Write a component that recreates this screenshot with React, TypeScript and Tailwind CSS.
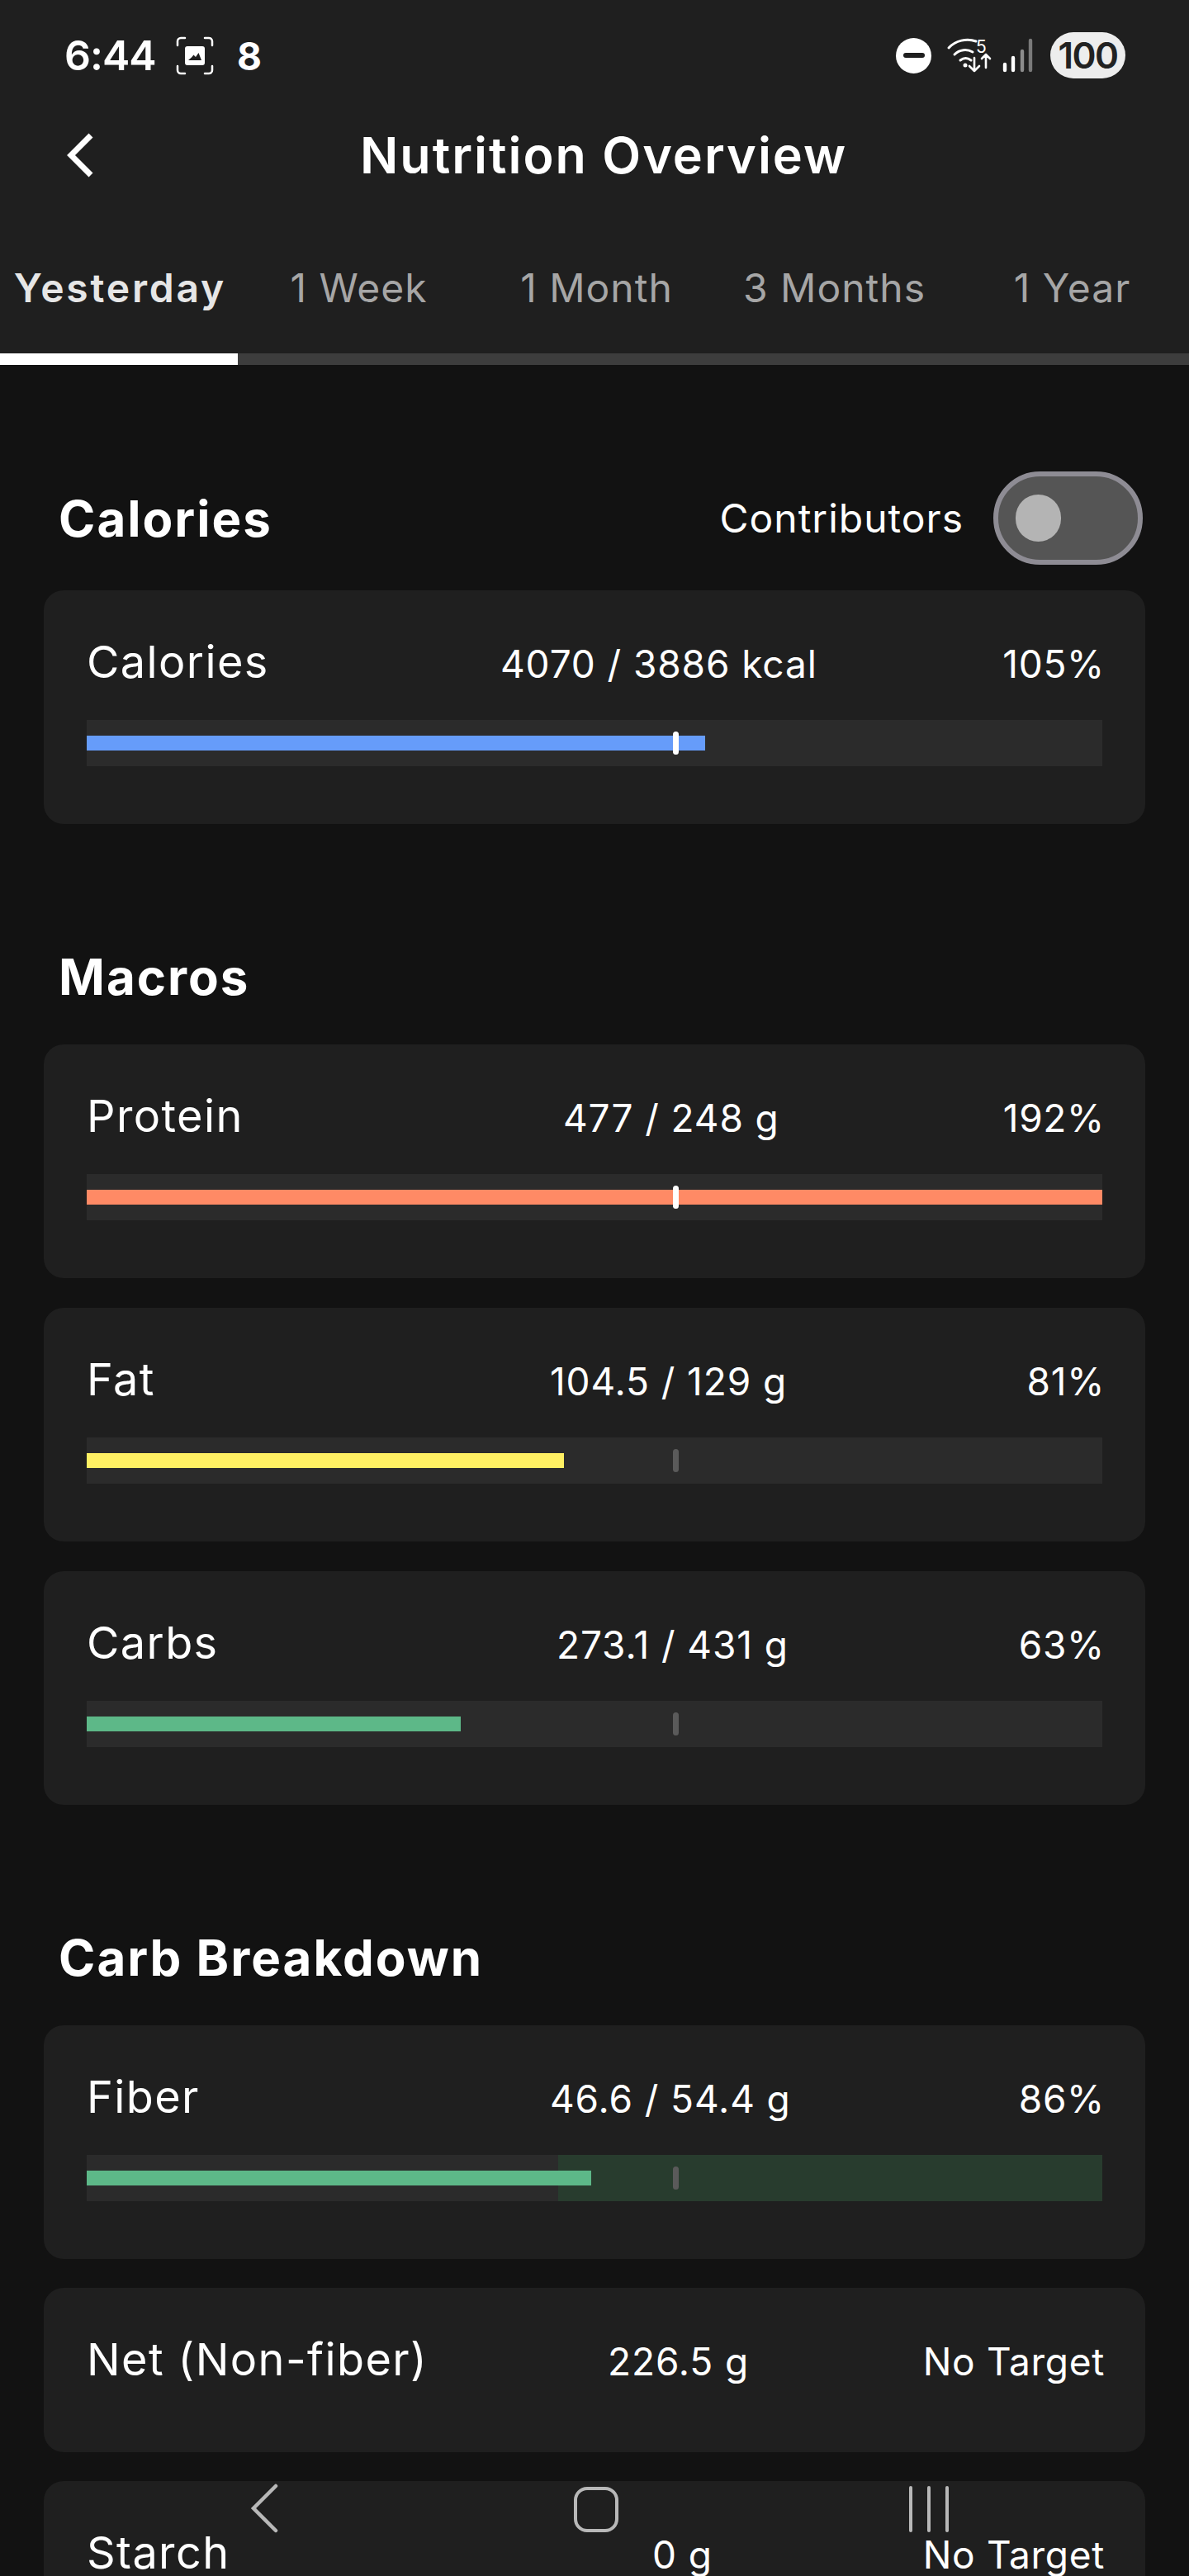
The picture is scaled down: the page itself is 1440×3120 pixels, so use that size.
import React from "react";

type Row = {
  name: string;
  value: string;
  pct: string;
  offset: string;
  fill?: string;
  color?: string;
  reached?: boolean;
  zone?: boolean;
};

const tabs = ["Yesterday", "1 Week", "1 Month", "3 Months", "1 Year"];

const calories: Row[] = [
  { name: "Calories", value: "4070 / 3886 kcal", pct: "105%", offset: "w-[501px]", fill: "w-[60.9%]", color: "bg-[#669cfa]", reached: true },
];
const macros: Row[] = [
  { name: "Protein", value: "477 / 248 g", pct: "192%", offset: "w-[577px]", fill: "w-full", color: "bg-[#ff8a65]", reached: true },
  { name: "Fat", value: "104.5 / 129 g", pct: "81%", offset: "w-[561px]", fill: "w-[47%]", color: "bg-[#fff063]" },
  { name: "Carbs", value: "273.1 / 431 g", pct: "63%", offset: "w-[569px]", fill: "w-[36.8%]", color: "bg-[#5db888]" },
];
const carbs: Row[] = [
  { name: "Fiber", value: "46.6 / 54.4 g", pct: "86%", offset: "w-[561px]", fill: "w-[49.7%]", color: "bg-[#5db888]", zone: true },
  { name: "Net (Non-fiber)", value: "226.5 g", pct: "No Target", offset: "w-[631px]" },
  { name: "Starch", value: "0 g", pct: "No Target", offset: "w-[685px]" },
];

function StatusBar() {
  return (
    <div className="flex h-[134px] items-start pt-[39px] pl-[78px] pr-[77px] text-white">
      <span className="w-[110px] text-[50px] leading-[56px] font-semibold tracking-[-1px]">6:44</span>
      <svg className="ml-[25px] mt-[5px] h-[47px] w-[46px]" viewBox="0 0 46 47" fill="none">
        <path d="M2 11V6a4 4 0 0 1 4-4h5M35 2h5a4 4 0 0 1 4 4v5M44 36v5a4 4 0 0 1-4 4h-5M11 45H6a4 4 0 0 1-4-4v-5" stroke="#fff" strokeWidth="2.5" strokeLinecap="round" />
        <path fillRule="evenodd" fill="#fff" d="M14 12h18a3 3 0 0 1 3 3v17a3 3 0 0 1-3 3H14a3 3 0 0 1-3-3V15a3 3 0 0 1 3-3zm1 17h16l-3.5-9-3.5 5-2.5-2.5-2.5 3z" />
      </svg>
      <span className="ml-[28px] mt-[1px] text-[46px] leading-[56px] font-bold">8</span>
      <div className="ml-auto flex items-center">
        <div className="flex h-[43px] w-[43px] items-center justify-center rounded-full bg-white">
          <div className="h-[6px] w-[26px] rounded-full bg-[#1f1f1f]" />
        </div>
        <svg className="ml-[19px] h-[44px] w-[59px] overflow-visible" viewBox="0 0 59 44" fill="none" stroke="#fff" strokeLinecap="round">
          <path d="M2 13C10 4 24 1 35 5" strokeWidth="3" />
          <path d="M9 21c6-6 15-7 22-3" strokeWidth="3" />
          <path d="M16 28c4-3 9-3 13 0" strokeWidth="3" />
          <circle cx="22" cy="34" r="2.5" fill="#fff" stroke="none" />
          <path d="M33 25v16M27 35l6 6 6-6M47 37V21M42 26l5-5 5 5" strokeWidth="2.6" strokeLinejoin="round" />
          <text x="35" y="19" fill="#fff" stroke="none" fontSize="21" fontFamily="Inter, sans-serif">5</text>
        </svg>
        <svg className="ml-[8px] h-[42px] w-[38px]" viewBox="0 0 38 42" fill="none" strokeWidth="4.4" strokeLinecap="round">
          <path d="M3 32v7M13 24v15" stroke="#fff" />
          <path d="M24 16v23" stroke="#8c8c8c" />
          <path d="M34 3v36" stroke="#7a7a7a" />
        </svg>
        <div className="ml-[20px] flex h-[56px] w-[91px] items-center justify-center rounded-full bg-[#ededed] text-[44px] font-semibold tracking-[-1.5px] text-[#222222]">
          100
        </div>
      </div>
    </div>
  );
}

function Header() {
  return (
    <div className="h-[442px] bg-[#1f1f1f]">
      <StatusBar />
      <div className="flex h-[108px] items-center pl-[80px]">
        <svg className="h-[54px] w-[34px]" viewBox="0 0 34 54" fill="none">
          <path d="M30 3 6 27l24 24" stroke="#fff" strokeWidth="7" />
        </svg>
        <h1 className="ml-[322px] text-[61px] leading-[72px] font-semibold tracking-[2px] text-white">Nutrition Overview</h1>
      </div>
      <div className="mt-[71px] grid h-[72px] grid-cols-5 items-center">
        {tabs.map((t, i) => (
          <div
            key={t}
            className={
              i === 0
                ? "pl-[3px] text-center text-[48px] font-semibold tracking-[2.8px] text-[#e6e6e6]"
                : "pl-[5px] text-center text-[48px] font-normal tracking-[1px] text-[#a6a6a6]"
            }
          >
            {t}
          </div>
        ))}
      </div>
      <div className="mt-[43px] h-[14px] bg-[#3d3d3d]">
        <div className="h-full w-[288px] bg-white" />
      </div>
    </div>
  );
}

function Bar({ row }: { row: Row }) {
  return (
    <div className="relative mt-[39px] h-[56px] bg-[#2b2b2b]">
      {row.zone && <div className="absolute inset-y-0 left-[46.4%] right-0 bg-[#283c2e]" />}
      <div className={`absolute left-0 top-[19px] h-[18px] ${row.fill} ${row.color}`} />
      <div
        className={`absolute left-[57.7%] top-[14px] h-[28px] w-[7px] rounded-full ${
          row.reached ? "bg-white" : "bg-[#5a5a5a]"
        }`}
      />
    </div>
  );
}

function Card({ row }: { row: Row }) {
  return (
    <div className={`rounded-[24px] bg-[#1f1f1f] px-[52px] pt-[56px] ${row.fill ? "pb-[70px]" : "pb-[81px]"}`}>
      <div className="flex h-[62px] items-baseline text-white">
        <div className={`shrink-0 text-[54px] leading-[62px] tracking-[1.4px] ${row.offset}`}>{row.name}</div>
        <div className="text-[46px] leading-[62px] tracking-[0.9px]">{row.value}</div>
        <div className="ml-auto -mr-[3px] text-[46px] leading-[62px] tracking-[0.7px]">{row.pct}</div>
      </div>
      {row.fill && <Bar row={row} />}
    </div>
  );
}

function SectionTitle({ children }: { children: React.ReactNode }) {
  return <h2 className="mt-[145px] mb-[42px] pl-[18px] text-[60px] leading-[80px] font-bold tracking-[2px] text-white">{children}</h2>;
}

function Toggle() {
  return (
    <div className="flex h-[113px] w-[181px] items-center rounded-full border-[6px] border-[#8e8c94] bg-[#555555] pl-[21px]">
      <div className="h-[57px] w-[55px] rounded-full bg-[#b4b4b4]" />
    </div>
  );
}

function NavBar() {
  return (
    <div className="absolute inset-x-0 top-[3008px] flex h-[60px] text-[#b8b8b8]">
      <svg className="ml-[303px] h-[60px] w-[34px]" viewBox="0 0 34 60" fill="none">
        <path d="M31 3 4 30l27 27" stroke="#b8b8b8" strokeWidth="4.5" strokeLinecap="round" />
      </svg>
      <div className="ml-[358px] mt-[4px] h-[55px] w-[54px] rounded-[16px] border-[4.5px] border-[#b8b8b8]" />
      <div className="ml-[352px] mt-[3px] flex h-[56px] w-[48px] justify-between">
        <div className="w-[4px] rounded-full bg-[#b8b8b8]" />
        <div className="w-[4px] rounded-full bg-[#b8b8b8]" />
        <div className="w-[4px] rounded-full bg-[#b8b8b8]" />
      </div>
    </div>
  );
}

export default function App() {
  return (
    <div className="relative h-[3120px] w-[1440px] overflow-hidden bg-[#121212] font-['Inter',sans-serif]">
      <Header />
      <main className="px-[53px]">
        <div className="mt-[129px] flex h-[113px] items-center pl-[18px] pr-[3px]">
          <h2 className="text-[60px] font-bold tracking-[2px] text-white">Calories</h2>
          <span className="ml-auto mr-[36px] text-[48px] tracking-[1px] text-white">Contributors</span>
          <Toggle />
        </div>
        <div className="mt-[31px]">
          {calories.map((r) => (
            <Card key={r.name} row={r} />
          ))}
        </div>
        <SectionTitle>Macros</SectionTitle>
        <div className="flex flex-col gap-[36px]">
          {macros.map((r) => (
            <Card key={r.name} row={r} />
          ))}
        </div>
        <SectionTitle>Carb Breakdown</SectionTitle>
        <div className="flex flex-col gap-[35px]">
          {carbs.map((r) => (
            <Card key={r.name} row={r} />
          ))}
        </div>
      </main>
      <NavBar />
    </div>
  );
}
